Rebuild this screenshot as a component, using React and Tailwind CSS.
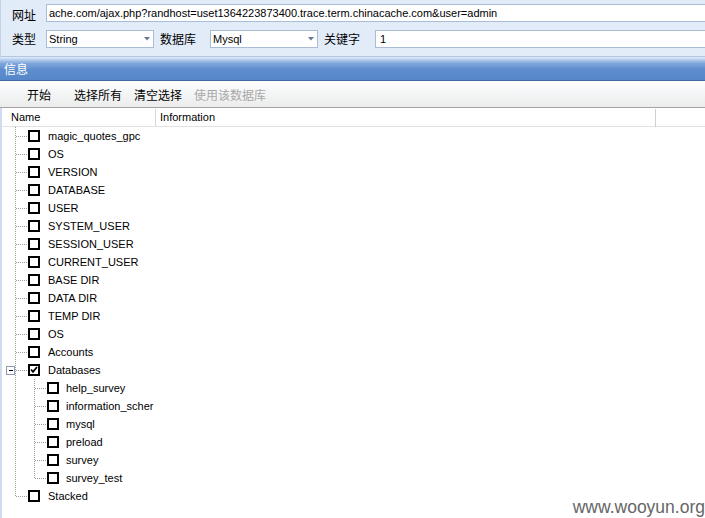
import React from "react";

const CJK = "font-['Noto_Sans_CJK_SC','Noto_Sans',sans-serif]";

function Checkbox({ checked }) {
  return (
    <div className="w-[12px] h-[12px] border-2 border-black bg-white flex items-center justify-center shrink-0">
      {checked && (
        <svg width="8" height="8" viewBox="0 0 8 8">
          <path d="M1 3.5 L3 5.8 L7 1" stroke="#000" strokeWidth="1.8" fill="none" />
        </svg>
      )}
    </div>
  );
}

function Dotted({ x1, y1, x2, y2 }) {
  return <line x1={x1} y1={y1} x2={x2} y2={y2} stroke="#9a9a9a" strokeWidth="1" strokeDasharray="1 1" shapeRendering="crispEdges" />;
}

function Row({ label, level, checked, lastTop, lastChild, expander }) {
  const w = level === 0 ? 26 : 45;
  return (
    <div className="flex items-center h-[18px]">
      <svg width={w} height="18" className="shrink-0">
        <Dotted x1={13.5} y1={0} x2={13.5} y2={lastTop ? 9 : 18} />
        {level === 0 && <Dotted x1={14} y1={9.5} x2={25} y2={9.5} />}
        {level === 1 && <Dotted x1={32.5} y1={0} x2={32.5} y2={lastChild ? 9 : 18} />}
        {level === 1 && <Dotted x1={33} y1={9.5} x2={44} y2={9.5} />}
        {expander && (
          <g>
            <rect x={4.5} y={5.5} width={8} height={8} fill="#fff" stroke="#8a9bb4" shapeRendering="crispEdges" />
            <line x1={6.5} y1={9.5} x2={11} y2={9.5} stroke="#000" shapeRendering="crispEdges" />
          </g>
        )}
      </svg>
      <Checkbox checked={checked} />
      <span className={`${level === 1 ? "ml-[7px]" : "ml-[8px]"} text-black whitespace-nowrap`}>{label}</span>
    </div>
  );
}

function Select({ value, w }) {
  return (
    <div className={`${w} h-[18px] bg-white border border-[#a9bdd7] flex items-center justify-between pl-[2px] pr-[3px]`}>
      <span>{value}</span>
      <svg width="6" height="4" viewBox="0 0 6 4"><path d="M0 0 H6 L3 3.5 Z" fill="#6a7a92" /></svg>
    </div>
  );
}

export default function App() {
  const top = [
    "magic_quotes_gpc", "OS", "VERSION", "DATABASE", "USER", "SYSTEM_USER", "SESSION_USER",
    "CURRENT_USER", "BASE DIR", "DATA DIR", "TEMP DIR", "OS", "Accounts",
  ];
  const children = ["help_survey", "information_scher", "mysql", "preload", "survey", "survey_test"];
  return (
    <div className="w-[705px] h-[518px] relative overflow-hidden bg-white flex flex-col font-['Liberation_Sans',Arial,sans-serif] text-[11px] text-black">
      {/* top panel */}
      <div className="h-[57px] shrink-0 bg-[#e2ebf8] border-l border-[#c4d4ea] border-b border-b-[#b3c7e2] flex flex-col pt-[4px] gap-[8px]">
        <div className="flex items-start h-[18px]">
          <span className={`${CJK} text-[12px] w-[45px] pl-[11px] mt-[4px] leading-[14px]`}>网址</span>
          <div className="flex-1 h-[18px] bg-white border border-[#a9bdd7] border-r-0 flex items-center pl-[2px] whitespace-nowrap overflow-hidden">
            ache.com/ajax.php?randhost=uset1364223873400.trace.term.chinacache.com&amp;user=admin
          </div>
        </div>
        <div className="flex items-center h-[18px]">
          <span className={`${CJK} text-[12px] w-[45px] pl-[11px]`}>类型</span>
          <Select value="String" w="w-[108px]" />
          <span className={`${CJK} text-[12px] w-[56px] pl-[6px]`}>数据库</span>
          <Select value="Mysql" w="w-[108px]" />
          <span className={`${CJK} text-[12px] w-[57px] pl-[6px]`}>关键字</span>
          <div className="flex-1 h-[18px] bg-white border border-[#a9bdd7] border-r-0 flex items-center pl-[4px]">1</div>
        </div>
      </div>
      {/* title bar */}
      <div className="h-[24px] shrink-0 bg-[linear-gradient(to_bottom,#e6eef9_0%,#b4cdee_12%,#7fa6db_28%,#5d8dcd_55%,#5687c9_100%)] border-b border-[#41699f] flex items-center pl-[4px] pt-[1px]">
        <span className={`${CJK} text-[12px] text-white`}>信息</span>
      </div>
      {/* toolbar */}
      <div className={`${CJK} h-[27px] shrink-0 bg-[linear-gradient(to_bottom,#fbfdfe,#ececec)] border-b border-[#a3a3a3] flex items-center text-[12px] pt-[1px]`}>
        <span className="ml-[27px]">开始</span>
        <span className="ml-[23px]">选择所有</span>
        <span className="ml-[12px]">清空选择</span>
        <span className="ml-[12px] text-[#a8a8a8]">使用该数据库</span>
      </div>
      {/* list */}
      <div className="flex-1 flex flex-col border-l-2 border-[#d0dcee]">
        <div className="h-[19px] shrink-0 border-b border-[#e2e2e2] flex items-center pt-[1px]">
          <span className="w-[153px] pl-[9px]">Name</span>
          <div className="w-[1px] h-[17px] bg-[#d6d6d6]" />
          <span className="w-[499px] pl-[4px]">Information</span>
          <div className="w-[1px] h-[18px] bg-[#d0d0d0]" />
        </div>
        <div className="flex flex-col">
          {top.map((t, i) => (
            <Row key={i} label={t} level={0} />
          ))}
          <Row label="Databases" level={0} checked expander />
          {children.map((c, i) => (
            <Row key={c} label={c} level={1} lastChild={i === children.length - 1} />
          ))}
          <Row label="Stacked" level={0} lastTop />
        </div>
      </div>
      <div className="absolute right-[0px] bottom-[1px] text-[17.5px] text-[#666] leading-[20px]">www.wooyun.org</div>
    </div>
  );
}
